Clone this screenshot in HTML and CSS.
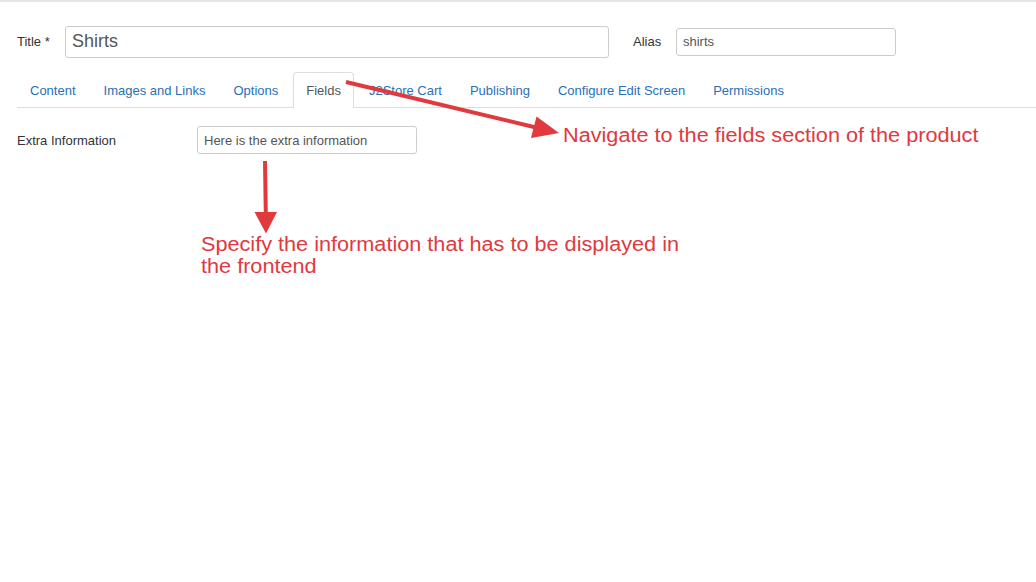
FILE: index.html
```html
<!DOCTYPE html>
<html>
<head>
<meta charset="utf-8">
<link rel="stylesheet" href="styles.css">
</head>
<body>
<div class="page">
  <div class="title-row">
    <label class="lbl lbl-title">Title *</label>
    <div class="input input-title">Shirts</div>
    <label class="lbl lbl-alias">Alias</label>
    <div class="input input-alias">shirts</div>
  </div>
  <ul class="tabs">
    <li class="tab"><a>Content</a></li>
    <li class="tab"><a>Images and Links</a></li>
    <li class="tab"><a>Options</a></li>
    <li class="tab active"><a>Fields</a></li>
    <li class="tab"><a>J2Store Cart</a></li>
    <li class="tab"><a>Publishing</a></li>
    <li class="tab"><a>Configure Edit Screen</a></li>
    <li class="tab"><a>Permissions</a></li>
  </ul>
  <div class="field-row">
    <label class="lbl lbl-field">Extra Information</label>
    <div class="input input-field">Here is the extra information</div>
  </div>
</div>
<svg class="arrows" width="1036" height="582" viewBox="0 0 1036 582">
  <line x1="346" y1="82" x2="536" y2="127.5" stroke="#e0393e" stroke-width="4"/>
  <polygon points="559,133 531,138 536.5,116.5" fill="#e0393e"/>
  <line x1="265" y1="161" x2="265.8" y2="214" stroke="#e0393e" stroke-width="4"/>
  <polygon points="254.5,212 277,212 266,233.5" fill="#e0393e"/>
</svg>
<div class="note note-nav">Navigate to the fields section of the product</div>
<div class="note note-spec">Specify the information that has to be displayed in<br>the frontend</div>
</body>
</html>
```
FILE: styles.css
```css
html, body {
  margin: 0;
  padding: 0;
  background: #fff;
}
body {
  font-family: "Liberation Sans", Arial, sans-serif;
  font-size: 13px;
  color: #333;
  border-top: 2px solid #e6e6e6;
  position: relative;
  width: 1036px;
  height: 580px;
  overflow: hidden;
}
.page {
  padding-left: 17px;
}
.title-row {
  display: flex;
  align-items: center;
  margin-top: 24px;
  height: 31px;
}
.lbl {
  color: #333;
  font-size: 13px;
}
.lbl-title {
  width: 48px;
}
.lbl-alias {
  margin-left: 24px;
  width: 43px;
}
.input {
  box-sizing: border-box;
  border: 1px solid #ccc;
  border-radius: 3px;
  background: #fff;
  color: #555;
  padding: 0 6px;
  display: flex;
  align-items: center;
}
.input-title {
  width: 544px;
  height: 32px;
  font-size: 18px;
}
.input-alias {
  width: 220px;
  height: 28px;
  font-size: 13px;
}
.tabs {
  list-style: none;
  margin: 15px 0 0 0;
  padding: 0;
  display: flex;
  border-bottom: 1px solid #ddd;
}
.tab {
  margin-right: 2px;
  margin-bottom: -1px;
}
.tab a {
  display: block;
  padding: 9px 12px 8px;
  line-height: 18px;
  color: #2a6fb8;
  border: 1px solid transparent;
  border-bottom: none;
  border-radius: 4px 4px 0 0;
}
.tab.active a {
  color: #555;
  background: #fff;
  border-color: #ddd;
}
.field-row {
  display: flex;
  align-items: center;
  margin-top: 18px;
  height: 28px;
}
.lbl-field {
  width: 180px;
}
.input-field {
  width: 220px;
  height: 28px;
  font-size: 13px;
}
.arrows {
  position: absolute;
  left: 0;
  top: -2px;
}
.note {
  position: absolute;
  color: #e0393e;
  font-family: "Liberation Sans", Arial, sans-serif;
  font-size: 20px;
  line-height: 22px;
  white-space: nowrap;
  transform: scaleX(1.083);
  transform-origin: 0 0;
}
.note-nav {
  left: 563px;
  top: 122px;
}
.note-spec {
  left: 201px;
  top: 231px;
}
```
